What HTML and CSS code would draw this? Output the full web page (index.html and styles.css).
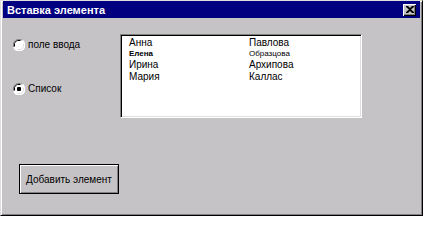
FILE: index.html
```html
<!DOCTYPE html>
<html lang="ru">
<head>
<meta charset="utf-8">
<title>Вставка элемента</title>
<link rel="stylesheet" href="styles.css">
</head>
<body>
<div class="window">
  <div class="titlebar">
    <span class="title">Вставка элемента</span>
    <span class="close"><svg width="8" height="7" viewBox="0 0 8 7"><path d="M0 0h2l2 2 2-2h2v1L5 3.5 8 6v1H6L4 5 2 7H0V6l3-2.5L0 1z" fill="#000"/></svg></span>
  </div>
  <div class="content">
    <div class="top">
      <div class="options">
        <label class="option">
          <svg class="radio" width="12" height="12" viewBox="0 0 12 12">
            <path d="M4 0h4l2 1 1 1 1 2v4l-1 2-1 1-2 1H4L2 11 1 10 0 8V4l1-2 1-1z" fill="#fff"/>
            <path d="M0.5 8V4l1-2 1-1 2-0.5h3l2 0.5" fill="none" stroke="#808080"/>
            <path d="M1.5 7.5V4.5l1-2 2-1h3" fill="none" stroke="#000"/>
            <path d="M11.5 4v4l-1 2-1 1-2 0.5h-3l-2-0.5" fill="none" stroke="#fff"/>
            <path d="M10.5 4.5v3l-1 2-2 1h-3" fill="none" stroke="#dfdfdf"/>
          </svg>
          <span>поле ввода</span>
        </label>
        <label class="option">
          <svg class="radio" width="12" height="12" viewBox="0 0 12 12">
            <path d="M4 0h4l2 1 1 1 1 2v4l-1 2-1 1-2 1H4L2 11 1 10 0 8V4l1-2 1-1z" fill="#fff"/>
            <path d="M0.5 8V4l1-2 1-1 2-0.5h3l2 0.5" fill="none" stroke="#808080"/>
            <path d="M1.5 7.5V4.5l1-2 2-1h3" fill="none" stroke="#000"/>
            <path d="M11.5 4v4l-1 2-1 1-2 0.5h-3l-2-0.5" fill="none" stroke="#fff"/>
            <path d="M10.5 4.5v3l-1 2-2 1h-3" fill="none" stroke="#dfdfdf"/>
            <rect x="4" y="4" width="4" height="4" rx="1" fill="#000"/>
          </svg>
          <span>Список</span>
        </label>
      </div>
      <div class="listbox">
        <div class="row"><span class="c1">Анна</span><span>Павлова</span></div>
        <div class="row small"><span class="c1 b">Елена</span><span>Образцова</span></div>
        <div class="row"><span class="c1">Ирина</span><span>Архипова</span></div>
        <div class="row"><span class="c1">Мария</span><span>Каллас</span></div>
      </div>
    </div>
    <button class="btn">Добавить элемент</button>
  </div>
</div>
</body>
</html>
```

FILE: styles.css
```css
html, body {
  margin: 0;
  padding: 0;
  background: #ffffff;
}
body {
  font-family: "Liberation Sans", Arial, sans-serif;
  font-size: 10px;
  color: #000;
}
.window {
  box-sizing: border-box;
  width: 423px;
  height: 216px;
  background: #c6c3c6;
  border-top: 1px solid #dfdfdf;
  border-left: 1px solid #dfdfdf;
  border-right: 1px solid #000;
  border-bottom: 1px solid #000;
  box-shadow: inset 1px 1px #fff, inset -1px -1px #808080;
  padding: 0 2px 2px 2px;
}
.titlebar {
  height: 17px;
  background: #000080;
  display: flex;
  align-items: center;
  justify-content: space-between;
  padding: 0 4px 0 4px;
}
.title {
  color: #fff;
  font-weight: bold;
  font-size: 11px;
}
.close {
  box-sizing: border-box;
  width: 13px;
  height: 12px;
  background: #c6c3c6;
  box-shadow: inset 1px 1px #fff, inset -1px -1px #000, inset -2px -2px #808080;
  display: flex;
  align-items: center;
  justify-content: center;
}
.content {
  padding: 16px 0 0 10px;
}
.top {
  display: flex;
}
.options {
  width: 107px;
  display: flex;
  flex-direction: column;
  gap: 31px;
  padding-top: 4px;
}
.option {
  display: flex;
  align-items: center;
  gap: 3px;
  height: 13px;
}
.radio {
  flex: none;
}
.listbox {
  box-sizing: border-box;
  width: 242px;
  height: 84px;
  background: #fff;
  border-top: 1px solid #808080;
  border-left: 1px solid #808080;
  border-right: 1px solid #fff;
  border-bottom: 1px solid #fff;
  box-shadow: inset 1px 1px #000, inset -1px -1px #dfdfdf;
  padding: 2px 0 0 8px;
}
.row {
  display: flex;
  height: 12px;
  line-height: 12px;
}
.row.small {
  height: 10px;
  line-height: 10px;
  font-size: 8px;
}
.c1 {
  width: 120px;
}
.b {
  font-weight: bold;
}
.btn {
  display: block;
  margin: 46px 0 0 6px;
  box-sizing: border-box;
  width: 100px;
  height: 30px;
  background: #c6c3c6;
  border: 1px solid #000;
  box-shadow: inset 1px 1px #fff, inset -1px -1px #808080;
  font-family: "Liberation Sans", Arial, sans-serif;
  font-size: 10px;
  color: #000;
  padding: 0;
}
```
